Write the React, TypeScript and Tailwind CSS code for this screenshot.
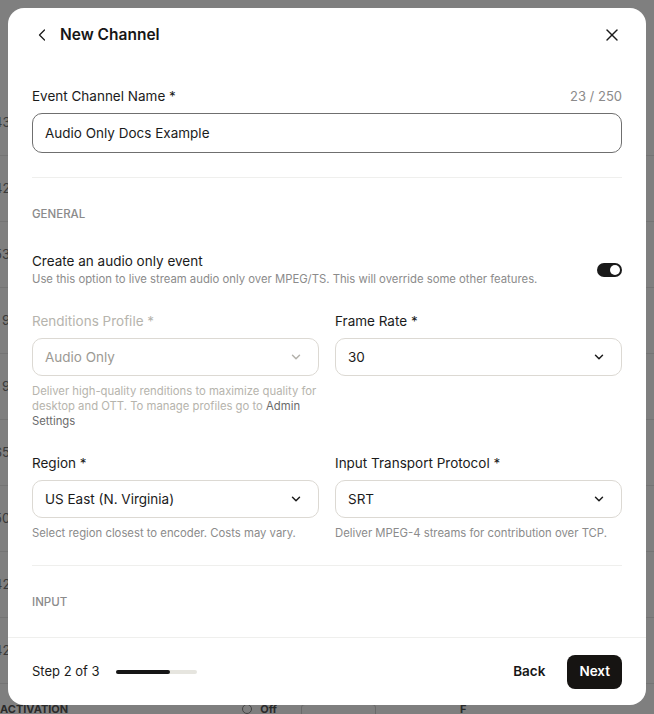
import { ChevronDown, ChevronLeft, X } from "lucide-react";

const rowNumbers = ["43", "42", "53", "9", "9", "65", "50", "42", "42"];

function Select({ value, disabled }: { value: string; disabled?: boolean }) {
	return (
		<div className="flex h-[38px] items-center justify-between rounded-[10px] border border-[#dcd9d3] bg-white pl-3 pr-[15px]">
			<span className={disabled ? "text-[13.5px] text-[#9c9a94]" : "text-[13.5px] text-[#1b1b1b]"}>{value}</span>
			<ChevronDown
				size={14}
				strokeWidth={2.5}
				className={disabled ? "text-[#b3b1ab]" : "text-[#1b1b1b]"}
			/>
		</div>
	);
}

function Field({
	label,
	value,
	disabled,
	children,
}: {
	label: string;
	value: string;
	disabled?: boolean;
	children: React.ReactNode;
}) {
	return (
		<div className="flex flex-col">
			<label className={disabled ? "mb-[7px] text-[13.5px] leading-5 text-[#b6b4ad]" : "mb-[7px] text-[13.5px] leading-5 text-[#1b1b1b]"}>
				{label}
			</label>
			<Select value={value} disabled={disabled} />
			<p className={disabled ? "mt-2 text-[11.3px] leading-[15px] text-[#b6b4ad]" : "mt-2 text-[11.3px] leading-[15px] text-[#8b8b8b]"}>
				{children}
			</p>
		</div>
	);
}

export default function App() {
	return (
		<div className="relative h-[714px] w-[654px] overflow-hidden bg-[#7f7f7f] font-['Inter',sans-serif]">
			{/* Page behind the overlay */}
			<div className="flex flex-col pt-[90px]">
				{rowNumbers.map((n, i) => (
					<div key={i} className="flex h-[66px] items-center border-b border-[#747474] text-[13px] text-[#3a3a3a]">
						<span className="-ml-[6px] w-[16px] text-right">{n}</span>
					</div>
				))}
			</div>
			<div className="absolute left-0 top-[705px] flex h-[20px] w-full items-start gap-6 text-[11px] font-bold text-[#2a2a2a]">
				<span className="-mt-[4px]">ACTIVATION</span>
				<span className="ml-[150px] -mt-[4px] flex items-center gap-2 font-normal">
					<span className="h-[10px] w-[10px] rounded-full border border-[#444]" />
					<b>Off</b>
				</span>
				<span className="-mt-[1px] h-[12px] w-[75px] rounded-t border border-b-0 border-[#6a6a6a]" />
				<span className="ml-[60px] -mt-[4px]">F</span>
			</div>

			{/* Modal */}
			<div className="absolute left-2 top-2 flex h-[697px] w-[638px] flex-col overflow-hidden rounded-2xl bg-white">
				<header className="flex h-[54px] shrink-0 items-center justify-between px-6">
					<div className="flex items-center gap-2">
						<ChevronLeft size={20} strokeWidth={1.5} className="text-[#1b1b1b]" />
						<h1 className="text-[15.5px] font-semibold text-[#161616]">New Channel</h1>
					</div>
					<X size={20} strokeWidth={1.75} className="text-[#1b1b1b]" />
				</header>

				<div className="flex-1 overflow-hidden px-6 pt-6">
					<div className="mb-[7px] flex items-center justify-between">
						<label className="text-[13.5px] leading-5 text-[#1b1b1b]">Event Channel Name *</label>
						<span className="text-[13px] leading-5 text-[#8b8b8b]">23 / 250</span>
					</div>
					<div className="flex h-10 items-center rounded-[10px] border border-[#6f6f6f] px-3">
						<span className="text-[13.5px] text-[#1b1b1b]">Audio Only Docs Example</span>
					</div>

					<div className="mt-6 border-t border-[#efefed]" />

					<h2 className="mt-7 text-[11.5px] font-medium leading-4 text-[#8b8b8b]">GENERAL</h2>

					<div className="mt-[29px] flex items-start justify-between">
						<div>
							<p className="text-[13.5px] leading-5 text-[#1b1b1b]">Create an audio only event</p>
							<p className="text-[11.3px] leading-4 text-[#8b8b8b]">
								Use this option to live stream audio only over MPEG/TS. This will override some other features.
							</p>
						</div>
						<div className="mt-3 flex h-[14px] w-[25px] items-center justify-end rounded-full bg-[#1a1a1a] pr-[2px]">
							<span className="h-[10px] w-[10px] rounded-full bg-white" />
						</div>
					</div>

					<div className="mt-6 grid grid-cols-2 gap-x-4">
						<Field label="Renditions Profile *" value="Audio Only" disabled>
							Deliver high-quality renditions to maximize quality for desktop and OTT. To manage profiles go to{" "}
							<span className="text-[#6b6b6b]">Admin Settings</span>
						</Field>
						<Field label="Frame Rate *" value="30">
							{""}
						</Field>
					</div>

					<div className="mt-6 grid grid-cols-2 gap-x-4">
						<Field label="Region *" value="US East (N. Virginia)">
							Select region closest to encoder. Costs may vary.
						</Field>
						<Field label="Input Transport Protocol *" value="SRT">
							Deliver MPEG-4 streams for contribution over TCP.
						</Field>
					</div>

					<div className="mt-6 border-t border-[#efefed]" />

					<h2 className="mt-7 text-[11.5px] font-medium leading-4 text-[#8b8b8b]">INPUT</h2>
				</div>

				<footer className="flex h-[68px] shrink-0 items-center justify-between border-t border-[#efefed] px-6">
					<div className="flex items-center gap-4">
						<span className="text-[13px] text-[#1b1b1b]">Step 2 of 3</span>
						<div className="h-1 w-[81px] rounded-full bg-[#e6e5df]">
							<div className="h-1 w-[54px] rounded-full bg-[#161616]" />
						</div>
					</div>
					<div className="flex items-center gap-[22px]">
						<button className="text-[13.5px] font-semibold text-[#161616]">Back</button>
						<button className="h-[34px] rounded-lg bg-[#161412] px-[12px] text-[13.5px] font-semibold text-white">Next</button>
					</div>
				</footer>
			</div>
		</div>
	);
}
